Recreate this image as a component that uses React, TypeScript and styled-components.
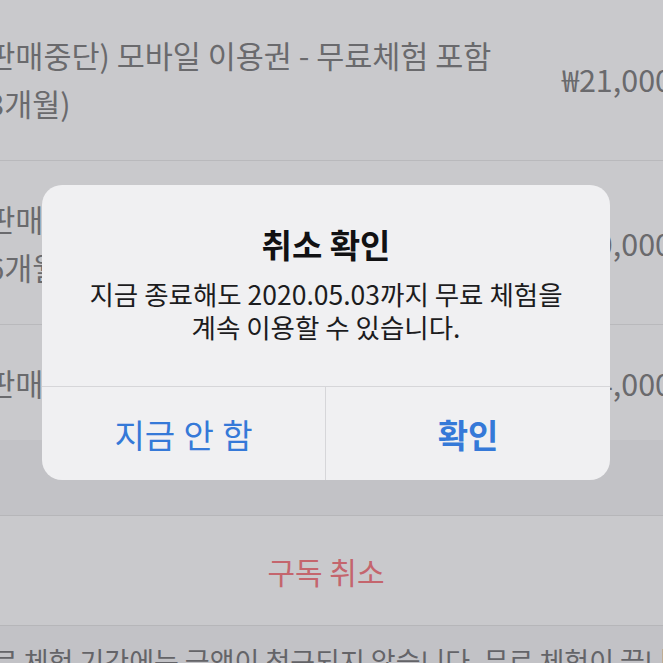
import React from 'react';
import styled, { createGlobalStyle } from 'styled-components';

// 전역 스타일
const GlobalStyle = createGlobalStyle`
  html, body {
    margin: 0;
    padding: 0;
  }
  body {
    background: #c2c2c6;
    font-family: "Noto Sans CJK KR", "Noto Sans", sans-serif;
  }
`;

// 화면 (확대된 스크린샷의 일부가 보이는 영역)
const Viewport = styled.div`
  position: relative;
  width: 663px;
  height: 663px;
  overflow: hidden;
  background: #c2c2c6;
`;

const Screen = styled.div`
  margin: -3px 0 0 -40px;
  width: 732px;
`;

const Section = styled.div`
  background: #c9c9cc;
`;

const Row = styled.div`
  display: grid;
  grid-template-columns: 585px 1fr;
  align-items: center;
  padding: 34px 0 33px 17px;
  border-bottom: 1px solid #b9b9bc;

  &:last-child {
    border-bottom: none;
  }
`;

const RowTitle = styled.div`
  font-size: 30.5px;
  line-height: 48px;
  color: #6a6a6d;
  white-space: nowrap;

  span {
    display: block;
  }
`;

const Price = styled.div`
  font-size: 30.5px;
  line-height: 48px;
  color: #6a6a6d;
  white-space: nowrap;
`;

const SectionGap = styled.div`
  height: 75px;
`;

const ActionCell = styled.div`
  height: 109px;
  display: flex;
  align-items: center;
  justify-content: center;
  background: #c9c9cc;
  border-top: 1px solid #b6b6b9;
  border-bottom: 1px solid #b6b6b9;
  font-size: 30px;
  color: #c4656d;
`;

const Footer = styled.div`
  padding: 17px 0 0 8px;
  font-size: 27px;
  line-height: 36px;
  color: #646468;
  white-space: nowrap;
`;

// 알림창
const Backdrop = styled.div`
  position: absolute;
  inset: 0;
  display: flex;
  align-items: flex-start;
  padding: 185px 0 0 42px;
`;

const Alert = styled.div`
  width: 568px;
  border-radius: 20px;
  background: #f0f0f2;
  overflow: hidden;
`;

const AlertBody = styled.div`
  padding: 37px 20px 43px;
  text-align: center;
  border-bottom: 1px solid #d6d6d9;
`;

const AlertTitle = styled.div`
  font-size: 33px;
  font-weight: 700;
  line-height: 44px;
  color: #111113;
  margin-bottom: 11px;
`;

const AlertMessage = styled.div`
  font-size: 26.5px;
  line-height: 33px;
  color: #1c1c1e;
`;

const ButtonRow = styled.div`
  display: grid;
  grid-template-columns: 1fr 1fr;
  height: 93px;
`;

const AlertButton = styled.button<{ $primary?: boolean }>`
  border: none;
  background: transparent;
  font-family: inherit;
  font-size: 33px;
  font-weight: ${p => (p.$primary ? 700 : 400)};
  color: #3579d8;
  word-spacing: 1px;
  padding: 0;
  cursor: pointer;

  &:first-child {
    border-right: 1px solid #d6d6d9;
  }
`;

const plans = [
  { lines: ['(판매중단) 모바일 이용권 - 무료체험 포함', '(3개월)'], price: '₩21,000' },
  { lines: ['(판매중단) 모바일 이용권 - 무료체험 포함', '(6개월)'], price: '₩40,000' },
  { lines: ['(판매중단) 모바일 이용권 (12개월)'], price: '₩84,000' },
];

const App: React.FC = () => {
  return (
    <>
      <GlobalStyle />
      <Viewport>
        <Screen>
          <Section>
            {plans.map((plan, i) => (
              <Row key={i}>
                <RowTitle>
                  {plan.lines.map(line => (
                    <span key={line}>{line}</span>
                  ))}
                </RowTitle>
                <Price>{plan.price}</Price>
              </Row>
            ))}
          </Section>
          <SectionGap />
          <ActionCell>구독 취소</ActionCell>
          <Footer>무료 체험 기간에는 금액이 청구되지 않습니다. 무료 체험이 끝나면 자동으로 결제됩니다.</Footer>
        </Screen>

        <Backdrop>
          <Alert>
            <AlertBody>
              <AlertTitle>취소 확인</AlertTitle>
              <AlertMessage>
                지금 종료해도 2020.05.03까지 무료 체험을
                <br />
                계속 이용할 수 있습니다.
              </AlertMessage>
            </AlertBody>
            <ButtonRow>
              <AlertButton>지금 안 함</AlertButton>
              <AlertButton $primary>확인</AlertButton>
            </ButtonRow>
          </Alert>
        </Backdrop>
      </Viewport>
    </>
  );
};

export default App;
